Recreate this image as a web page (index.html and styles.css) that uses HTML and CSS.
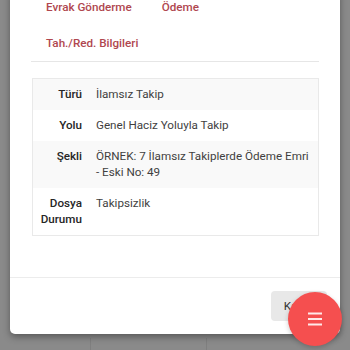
FILE: index.html
```html
<!DOCTYPE html>
<html lang="tr">
<head>
<meta charset="utf-8">
<link rel="stylesheet" href="styles.css">
</head>
<body>
<div class="modal">
  <div class="modal-body">
    <nav class="tabs">
      <a class="tab">Evrak Gönderme</a>
      <a class="tab">Ödeme</a>
      <a class="tab">Tah./Red. Bilgileri</a>
    </nav>
    <table class="info">
      <tr class="striped"><th>Türü</th><td>İlamsız Takip</td></tr>
      <tr><th>Yolu</th><td>Genel Haciz Yoluyla Takip</td></tr>
      <tr class="striped"><th>Şekli</th><td>ÖRNEK: 7 İlamsız Takiplerde Ödeme Emri - Eski No: 49</td></tr>
      <tr><th>Dosya Durumu</th><td>Takipsizlik</td></tr>
    </table>
  </div>
  <div class="modal-footer">
    <button class="btn">Kapat</button>
  </div>
</div>
<div class="behind">
  <div class="col c1"></div>
  <div class="col c2"></div>
  <div class="col c3"></div>
</div>
<button class="fab" aria-label="Menü">
  <svg width="16" height="14" viewBox="0 0 16 14"><path d="M1 1.5h14M1 7h14M1 12.5h14" stroke="#ffe9e9" stroke-width="2" fill="none"/></svg>
</button>
</body>
</html>
```
FILE: styles.css
```css
html, body {
  margin: 0;
  padding: 0;
  height: 350px;
  overflow: hidden;
}
body {
  background: #8a8a8a;
  font-family: Roboto, "Noto Sans", sans-serif;
  font-size: 11.67px;
  color: #333;
}
.modal {
  margin: -11px 10px 0;
  width: 330px;
  background: #fff;
  border-radius: 5px;
  box-shadow: 0 3px 7px rgba(0,0,0,0.35);
  position: relative;
  z-index: 1;
}
.modal-body {
  padding: 0 21px 41px 22px;
}
.tabs {
  display: flex;
  flex-wrap: wrap;
  margin-left: -1px;
  border-bottom: 1px solid #e6e6e6;
  margin-bottom: 16px;
}
.tab {
  padding: 10px 15px;
  line-height: 16px;
  font-weight: 500;
  color: #b0474f;
}
.info {
  width: 100%;
  border-collapse: collapse;
  border: 1px solid #e9e9e9;
  line-height: 16px;
}
.info th, .info td {
  padding: 7px 7px 8px;
  vertical-align: top;
}
.info th {
  width: 42px;
  text-align: right;
  font-weight: 500;
  color: #262626;
}
.info td {
  color: #3f3f3f;
  font-weight: 400;
}
.striped {
  background: #f9f9f9;
}
.modal-footer {
  border-top: 1px solid #ececec;
  padding: 13px 13px 13px;
  display: flex;
  justify-content: flex-end;
}
.btn {
  height: 30px;
  padding: 0 13px;
  border: none;
  border-radius: 4px;
  background: #e8e8e8;
  font-family: inherit;
  font-size: 11.67px;
  color: #333;
}
.behind {
  display: flex;
  margin-top: 4px;
  height: 20px;
}
.col {
  border-right: 1px solid #7f7f7f;
}
.c1 { width: 90px; }
.c2 { width: 115px; }
.c3 { flex: 1; border-right: none; }
.fab {
  position: absolute;
  left: 288px;
  top: 292px;
  width: 54px;
  height: 54px;
  border-radius: 50%;
  border: none;
  background: #f54f4f;
  box-shadow: 0 2px 5px rgba(0,0,0,0.2);
  display: flex;
  align-items: center;
  justify-content: center;
  padding: 0;
  z-index: 2;
}
```
